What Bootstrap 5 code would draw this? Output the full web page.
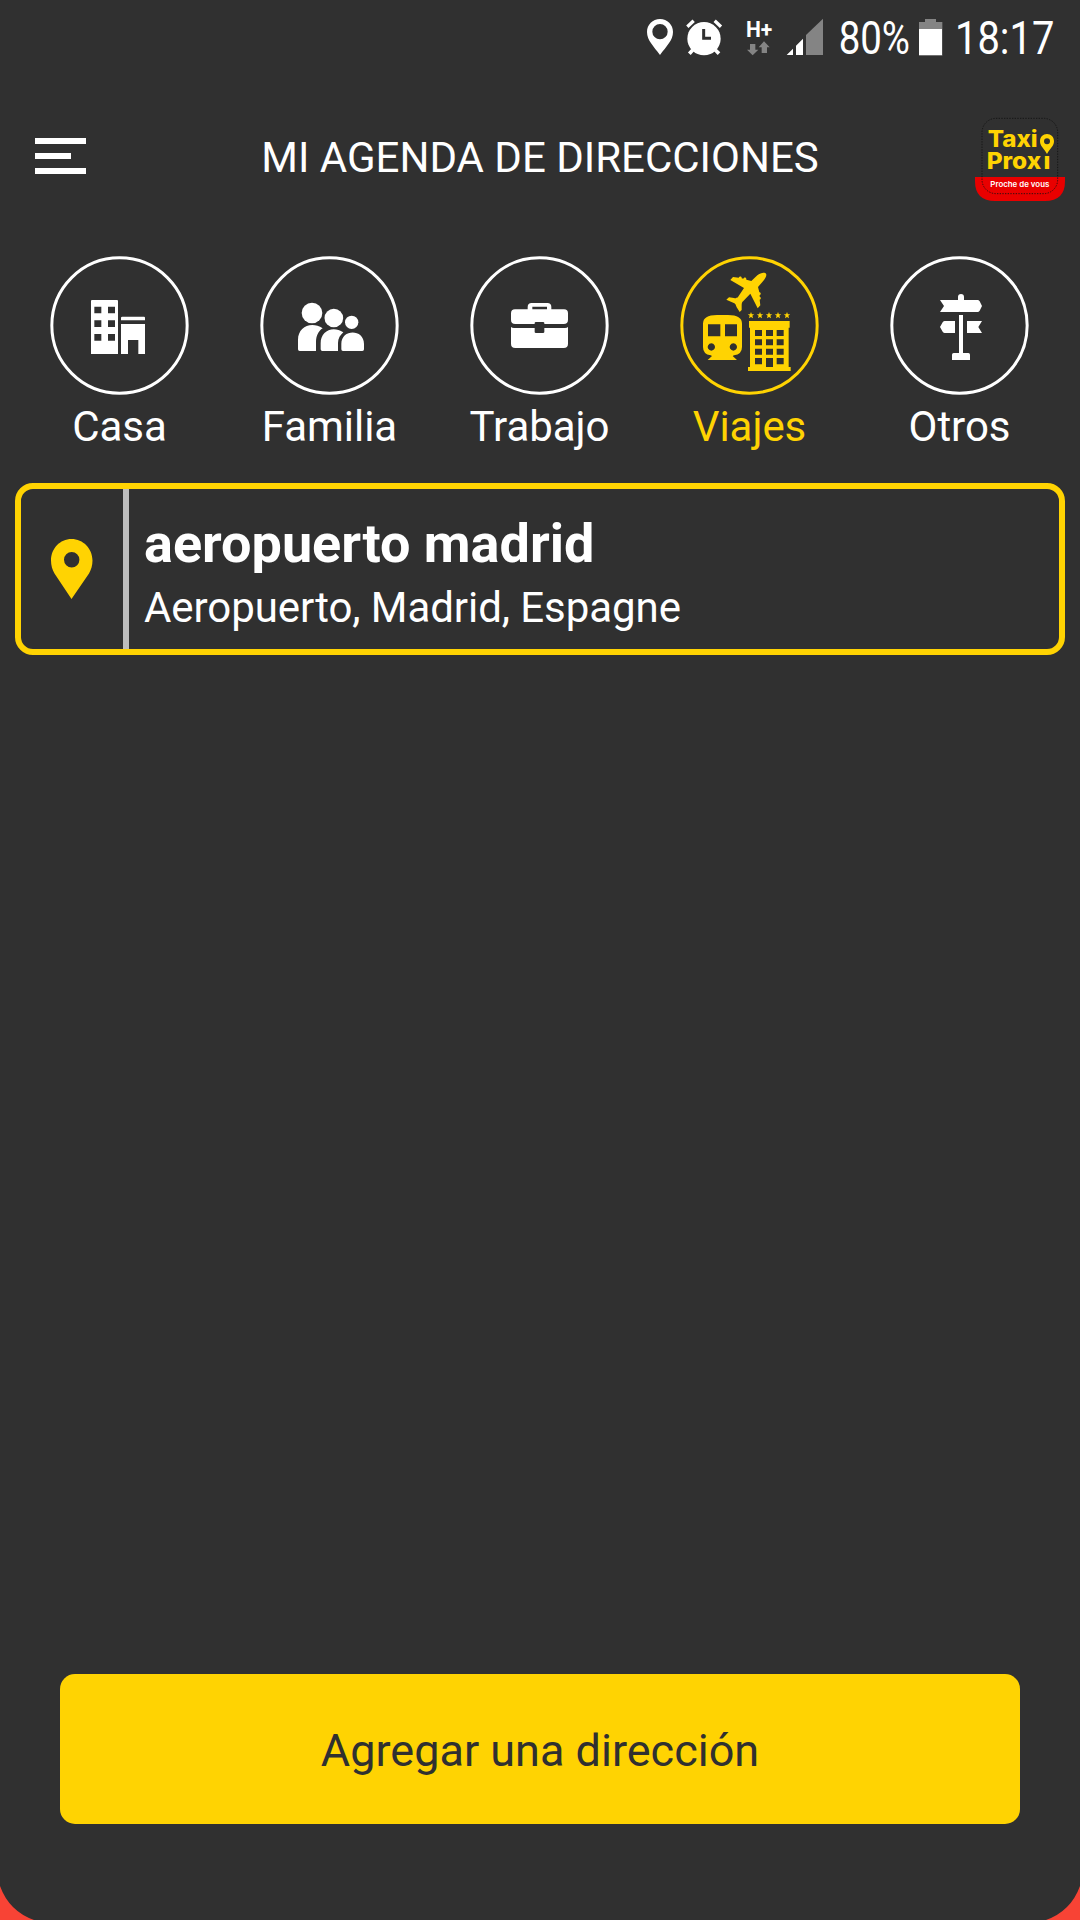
<!DOCTYPE html>
<html lang="es">
<head>
<meta charset="utf-8">
<meta name="viewport" content="width=device-width, initial-scale=1">
<title>Mi agenda de direcciones</title>
<link rel="stylesheet" href="https://cdn.jsdelivr.net/npm/bootstrap@5.3.0/dist/css/bootstrap.min.css">
<style>
:root{--ink:#303030;--sun:#ffd302}
body{background:var(--ink);color:#fff;font-family:Roboto,sans-serif;font-size:42px;line-height:50px}
.screen{height:1920px;width:1080px;overflow:hidden}
.statusbar{height:105px;padding-left:630px}
.topbar{height:151px}
.menu-btn{margin:33px 34px 0 35px;width:51px}
.heading{margin:28px 0 0;font-size:42px;line-height:50px;font-weight:400}
.category{width:210px;color:#fff;text-decoration:none}
.category.current{color:var(--sun)}
.category span{margin-top:6px;padding-right:1px;letter-spacing:-.05px}
.address{margin:31px 15px 0;height:172px;border:6px solid var(--sun);border-radius:18px;background:none;color:#fff}
.pin-cell{width:108px;border-right:6px solid #bdbdbd;padding:50px 0 0 30px}
.address-text{padding:23px 0 0 15px}
.address-name{font-size:54px;line-height:64px;font-weight:700;margin:0 0 7px}
.address-line{letter-spacing:-.07px}
.btn-add,.btn-add:hover{margin:0 60px 62px;height:150px;border-radius:15px;border:0;background:var(--sun);color:var(--ink);font-size:45px;line-height:54px;padding:3px 0 0}
svg{display:block;flex:none}
</style>
</head>
<body>
<main class="screen d-flex flex-column">
  <div class="statusbar">
    <svg width="450" height="80" viewBox="0 0 1350 240" fill="#fff">
      <path fill-rule="evenodd" d="M90 57c-22 0-39 17-39 39 0 25 20 43 39 69 19-26 39-44 39-69 0-22-17-39-39-39zm0 15a23 23 0 1 1 0 46 23 23 0 0 1 0-46z"/>
      <circle cx="222" cy="116" r="50"/>
      <path d="M172 80l19-18M254 62l19 18" stroke="#fff" stroke-width="10"/>
      <path d="M188 150l-10 11M256 150l11 11" stroke="#fff" stroke-width="11"/>
      <path d="M221 87v28h22" fill="none" stroke="#303030" stroke-width="9"/>
      <text x="348" y="110" font-size="65" font-weight="700" textLength="79" lengthAdjust="spacingAndGlyphs">H+</text>
      <path fill="#848484" d="M360 132h16v17h9l-17 17-17-17h9zM395 159h16v-17h8l-17-18-16 18h9z"/>
      <path d="M470 165l19-19v19zM498 165v-28l21-21v49z"/>
      <path fill="#848484" d="M528 165v-60l51-49v109z"/>
      <text x="626" y="162" font-size="137" textLength="214" lengthAdjust="spacingAndGlyphs">80%</text>
      <path fill="#848484" d="M885 57h33v9h19v101h-70V66h18z"/>
      <path d="M867 87h69v78h-69z"/>
      <text x="975" y="162" font-size="137" textLength="298" lengthAdjust="spacingAndGlyphs">18:17</text>
    </svg>
  </div>

  <header class="topbar d-flex justify-content-between align-items-start">
    <div class="menu-btn">
      <svg width="51" height="36" fill="#fff"><path d="M0 0h51v6H0zM0 15h36v6H0zM0 30h51v6H0z"/></svg>
    </div>
    <h1 class="heading">MI AGENDA DE DIRECCIONES</h1>
    <svg width="120" height="110" viewBox="0 0 360 330">
      <path fill="#e90000" d="M45 216h270v12q0 60-60 60H105q-60 0-60-60z"/>
      <rect x="66" y="40" width="227" height="226" rx="42" fill="none" stroke="#111" stroke-width="2.500" stroke-dasharray="4 4"/>
      <g fill="#ffd302" font-family="Inter,sans-serif" font-weight="800" font-size="68">
        <text x="83" y="125" textLength="150" lengthAdjust="spacingAndGlyphs">Taxi</text>
        <text x="80" y="191" textLength="191" lengthAdjust="spacingAndGlyphs">Prox<tspan dx="6">ı</tspan></text>
        <path fill-rule="evenodd" d="M261 87c-12 0-21 9-21 22 0 14 12 22 21 38 9-16 21-24 21-38 0-13-9-22-21-22zm0 13a9 9 0 1 1 0 18 9 9 0 0 1 0-18z"/>
      </g>
      <text x="91" y="246" fill="#fff" font-family="Inter,sans-serif" font-weight="600" font-size="24" textLength="177" lengthAdjust="spacingAndGlyphs">Proche de vous</text>
    </svg>
  </header>

  <nav class="d-flex justify-content-center">
    <a class="category d-flex flex-column align-items-center" href="#">
      <svg width="140" height="140" viewBox="30 33 420 420" fill="#fff">
        <circle cx="238.500" cy="241.500" r="203" fill="none" stroke="#fff" stroke-width="9"/>
        <path fill-rule="evenodd" d="M156 165h75q3 0 3 3v159h-81V168q0-3 3-3zM163 185v20h21v-20zm41 0v20h21v-20zm-41 41v20h21v-20zm41 0v20h21v-20zm-41 41v20h21v-20zm41 0v20h21v-20z"/>
        <path d="M247 215h65q3 0 3 3v8h-72v-8q0-3 4-3zM243 237h72v90h-20v-42h-31v42h-21z"/>
      </svg>
      <span>Casa</span>
    </a>
    <a class="category d-flex flex-column align-items-center" href="#">
      <svg width="140" height="140" viewBox="660 33 420 420" fill="#fff">
        <circle cx="868.500" cy="241.500" r="203" fill="none" stroke="#fff" stroke-width="9"/>
        <circle cx="816" cy="204" r="31"/><circle cx="881.500" cy="219" r="28"/><circle cx="935" cy="232" r="20"/>
        <path d="M774 313v-28c0-40 40-57 74-35-13 8-20 23-20 42v26h-49q-5 0-5-5zM842 313v-19c0-36 36-54 68-32-9 8-16 18-16 32v24h-47q-5 0-5-5zM904 313v-16c0-46 68-46 68 0v16q0 5-5 5h-58q-5 0-5-5z"/>
      </svg>
      <span>Familia</span>
    </a>
    <a class="category d-flex flex-column align-items-center" href="#">
      <svg width="140" height="140" viewBox="30 33 420 420" fill="#fff">
        <circle cx="238.500" cy="241.500" r="203" fill="none" stroke="#fff" stroke-width="9"/>
        <path fill-rule="evenodd" d="M203 193v-7q0-12 12-12h47q12 0 12 12v7h38q12 0 12 12v19q0 13-13 13h-58v-3q0-3-4-3h-21q-4 0-4 3v3h-58q-13 0-13-13v-19q0-12 12-12zm14 0h44v-8h-44zM153 246q3 3 9 3h62v12q0 3 4 3h21q4 0 4-3v-12h62q6 0 9-3v50q0 13-13 13H166q-13 0-13-13z"/>
      </svg>
      <span>Trabajo</span>
    </a>
    <a class="category current d-flex flex-column align-items-center" href="#">
      <svg width="140" height="140" viewBox="30 33 420 420" fill="#ffd302">
        <circle cx="238.500" cy="241.500" r="203" fill="none" stroke="#ffd302" stroke-width="9"/>
        <path d="M288 86c-3-5-17-3-26 5l-18 17-15-4c1-8-7-8-9-3l-5-1c1-6-7-7-9-2l-17-2-8 9 41 24-18 27c-3 4-7 4-12 3l-15-2-8 7 24 11c5 3 5 8 7 12l9 14 6-6 0-14c0-6 1-10 5-13l21-22 22 44 8-9-2-17c5-1 4-8 0-9v-5c5-1 4-8-1-8l-4-16 15-17c8-10 12-18 9-23z"/>
        <path fill-rule="evenodd" d="M99 236q0-26 42-26h33q42 0 42 26v70q0 22-24 25l-4 2 13 12h-88l13-12-4-2q-23-3-23-25zM114 238v36h37v-36zm51 0v36h36v-36zM124 295a11 11 0 1 0 .1 0zm66 0a11 11 0 1 0 .1 0z"/>
        <path fill-rule="evenodd" d="M237 228h122v20h-3v118h6v12H234v-12h6V248h-3zM255 255v18h21v-18zm33 0v18h21v-18zm32 0v18h21v-18zM255 283v18h21v-18zm33 0v18h21v-18zm32 0v18h21v-18zM255 311v18h21v-18zm33 0v18h21v-18zm32 0v18h21v-18zM255 339v19h21v-19zm33 0v27h21v-27zm32 0v19h21v-19z"/>
        <defs><path id="star" d="M0-10l2.600 7h7l-5.600 4.500 2.200 7.500L0 5l-6.200 4 2.200-7.500L-9.600-3h7z"/></defs>
        <use href="#star" x="243" y="211"/><use href="#star" x="270" y="211"/><use href="#star" x="297" y="211"/><use href="#star" x="324" y="211"/><use href="#star" x="351" y="211"/>
      </svg>
      <span>Viajes</span>
    </a>
    <a class="category d-flex flex-column align-items-center" href="#">
      <svg width="140" height="140" viewBox="30 33 420 420" fill="#fff">
        <circle cx="238.500" cy="241.500" r="203" fill="none" stroke="#fff" stroke-width="9"/>
        <path d="M234 165v-9q0-9 9-9t9 9v9h41q3 0 6 4l7 14-7 14q-3 4-6 4H180l12-18-12-18zM237 210h12v114h16q5 0 5 5v16h-54v-16q0-5 5-5h16zM225 228v36h-31q-3 0-6-4l-8-14 8-14q3-4 6-4zM261 228h45l-11 18 11 18h-45z"/>
      </svg>
      <span>Otros</span>
    </a>
  </nav>

  <section class="address d-flex align-items-stretch">
    <div class="pin-cell">
      <svg width="42" height="60" fill="#ffd302"><path fill-rule="evenodd" d="M20.500 0C9 0 0 9.500 0 21.500c0 5 1.300 9 3.500 13L20.500 60l17.500-25.500c2.200-4 3.500-8 3.500-13C41.500 9.500 32 0 20.500 0zm.2 13a7.700 7.700 0 1 1 0 15.400 7.700 7.700 0 0 1 0-15.400z"/></svg>
    </div>
    <div class="address-text">
      <h2 class="address-name">aeropuerto madrid</h2>
      <p class="address-line m-0">Aeropuerto, Madrid, Espagne</p>
    </div>
  </section>

  <button class="btn btn-add mt-auto" type="button">Agregar una dirección</button>
  <div class="d-flex justify-content-between">
    <svg width="34" height="34" fill="#f84335"><path d="M0 0Q9 25 34 34H0z"/></svg>
    <svg width="34" height="34" fill="#f84335"><path d="M34 0Q25 25 0 34H34z"/></svg>
  </div>
</main>
<script src="https://cdn.jsdelivr.net/npm/bootstrap@5.3.0/dist/js/bootstrap.bundle.min.js"></script>
</body>
</html>
